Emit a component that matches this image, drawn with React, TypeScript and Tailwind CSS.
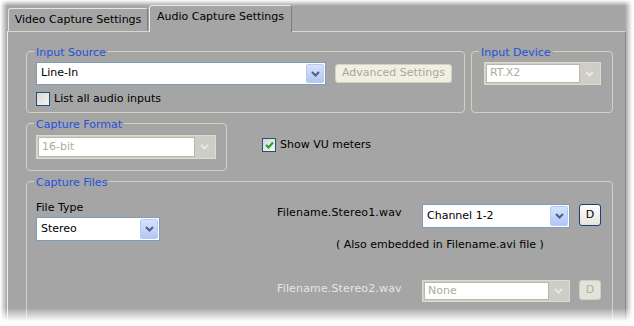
import React from 'react';

const SANS = "font-['DejaVu_Sans',Tahoma,sans-serif]";

function Chevron({ color }: { color: string }) {
  return (
    <svg width="9" height="6" viewBox="0 0 9 6" aria-hidden="true">
      <path d="M1 1l3.5 3.5L8 1" fill="none" stroke={color} strokeWidth="2" />
    </svg>
  );
}

/** Enabled XP-style drop-down */
function Combo({ value, className }: { value: string; className: string }) {
  return (
    <div className={`flex border border-[#7f9db9] bg-white p-px ${className}`}>
      <div className="flex flex-1 items-center pl-[3px] text-black">{value}</div>
      <div className="flex w-[18px] items-center justify-center rounded-[2px] border border-[#b8c9f1] bg-linear-to-b from-[#d6e2fd] to-[#b3c7f6]">
        <Chevron color="#4d6185" />
      </div>
    </div>
  );
}

/** Greyed-out drop-down */
function DisabledCombo({ value, className }: { value: string; className: string }) {
  return (
    <div className={`flex border border-[#dddcd1] bg-[#cfcec6] p-px ${className}`}>
      <div className="flex flex-1 items-center border border-[#b9b8ad] bg-white pl-[3px] text-[#acab9f]">
        {value}
      </div>
      <div className="flex w-[19px] items-center justify-center">
        <Chevron color="#e9e8df" />
      </div>
    </div>
  );
}

function Checkbox({ checked, label }: { checked?: boolean; label: string }) {
  return (
    <div className="flex items-center">
      <div className="flex h-[14px] w-[14px] items-center justify-center border border-[#1c5180] bg-linear-to-br from-[#d8d8d2] to-[#f6f6f2]">
        {checked && (
          <svg width="9" height="8" viewBox="0 0 9 8" aria-hidden="true">
            <path d="M1 4l2.5 2.5L8 1.5" fill="none" stroke="#21a121" strokeWidth="2" />
          </svg>
        )}
      </div>
      <span className="ml-[4px] text-black">{label}</span>
    </div>
  );
}

function Group({ title, className, children }: { title: string; className: string; children: React.ReactNode }) {
  return (
    <div className={`relative rounded-[4px] border border-[#d3d2c2] ${className}`}>
      <span className="absolute -top-[7px] left-[7px] bg-[#a5a5a5] px-[2px] leading-[15px] text-[#1f52dc]">
        {title}
      </span>
      {children}
    </div>
  );
}

function DButton({ disabled }: { disabled?: boolean }) {
  return disabled ? (
    <div className="ml-[9px] flex h-[20px] w-[22px] items-center justify-center rounded-[3px] border border-[#d0cebe] bg-[#e4e3da] text-[#aeada0]">
      D
    </div>
  ) : (
    <div className="ml-[9px] flex h-[22px] w-[22px] items-center justify-center rounded-[3px] border border-[#1c3f75] bg-linear-to-b from-white to-[#e6e4da] text-black">
      D
    </div>
  );
}

export default function App() {
  return (
    <div className={`relative h-[326px] w-[634px] overflow-hidden bg-[#a5a5a5] text-[11px] ${SANS}`}>
      <div className="flex h-full flex-col">
        {/* tabs */}
        <div className="flex h-[32px] items-end pl-[8px] pt-[5px]">
          <div className="flex h-[23px] w-[140px] items-center justify-center rounded-t-[3px] border-l border-t border-r border-l-[#e6e6de] border-t-[#e6e6de] border-r-[#7c7c7c] text-black">
            Video Capture Settings
          </div>
          <div className="relative z-10 -mb-px ml-px flex h-[27px] w-[143px] items-center justify-center rounded-t-[3px] border-l border-t border-r border-l-[#ececE4] border-t-[#ececE4] border-r-[#7c7c7c] bg-[#a5a5a5] pb-[3px] text-black">
            Audio Capture Settings
          </div>
        </div>

        {/* tab panel */}
        <div className="ml-[7px] mr-[8px] flex-1 border-l border-t border-r border-l-[#efefe8] border-t-[#d9d8c8] border-r-[#7e7e7e] pl-[18px] pr-[12px] pt-[19px]">
          <div className="flex gap-[6px]">
            <Group title="Input Source" className="h-[62px] w-[439px] pl-[9px] pt-[10px]">
              <div className="flex items-start">
                <Combo value="Line-In" className="h-[23px] w-[290px]" />
                <div className="ml-[9px] mt-[2px] flex h-[19px] w-[117px] items-center justify-center rounded-[3px] border border-[#d4d2bf] bg-[#f0efe2] text-[#a9a89a]">
                  Advanced Settings
                </div>
              </div>
              <div className="mt-[6px]">
                <Checkbox label="List all audio inputs" />
              </div>
            </Group>
            <Group title="Input Device" className="h-[62px] flex-1 pl-[12px] pt-[10px]">
              <DisabledCombo value="RT.X2" className="h-[23px] w-[117px]" />
            </Group>
          </div>

          <div className="mt-[10px] flex items-start">
            <Group title="Capture Format" className="h-[48px] w-[201px] pl-[9px] pt-[11px]">
              <DisabledCombo value="16-bit" className="h-[24px] w-[180px]" />
            </Group>
            <div className="ml-[35px] mt-[14px]">
              <Checkbox checked label="Show VU meters" />
            </div>
          </div>

          <Group title="Capture Files" className="mt-[10px] h-[160px] pl-[9px] pt-[18px]">
            <div className="flex">
              <div className="w-[241px]">
                <div className="leading-[15px] text-black">File Type</div>
                <Combo value="Stereo" className="mt-[2px] h-[24px] w-[124px]" />
              </div>
              <div className="mt-[4px]">
                <div className="flex items-start">
                  <div className="w-[145px] pt-px leading-[15px] tracking-[0.15px] text-black">
                    Filename.Stereo1.wav
                  </div>
                  <Combo value="Channel 1-2" className="h-[24px] w-[148px]" />
                  <DButton />
                </div>
                <div className="mt-[9px] pl-[59px] leading-[15px] text-black">
                  ( Also embedded in Filename.avi file )
                </div>
                <div className="mt-[28px] flex items-start">
                  <div className="w-[145px] pt-px leading-[15px] tracking-[0.15px] text-[#e6e6e6]">
                    Filename.Stereo2.wav
                  </div>
                  <DisabledCombo value="None" className="h-[22px] w-[148px]" />
                  <DButton disabled />
                </div>
              </div>
            </div>
          </Group>
        </div>
      </div>

      {/* soft screenshot edges */}
      <div className="pointer-events-none absolute inset-y-0 left-0 w-[7px] bg-linear-to-r from-white to-transparent" />
      <div className="pointer-events-none absolute inset-x-0 top-0 h-[6px] bg-linear-to-b from-white to-transparent" />
      <div className="pointer-events-none absolute inset-y-0 right-0 w-[9px] bg-linear-to-l from-white from-20% to-transparent" />
      <div className="pointer-events-none absolute inset-x-0 bottom-0 h-[18px] bg-linear-to-t from-white from-25% to-transparent" />
    </div>
  );
}
